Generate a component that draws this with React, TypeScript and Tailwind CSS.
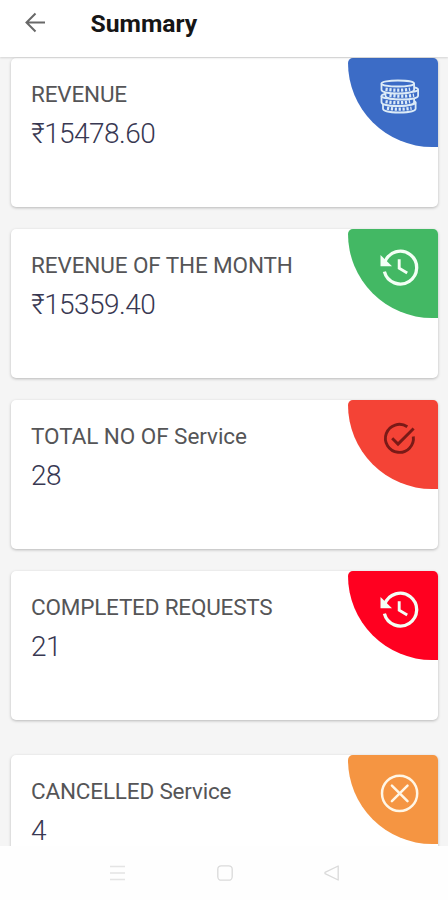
import type { ReactNode } from "react";

const coins = [
  { x: 3, y: 25.5 },
  { x: 1.5, y: 19 },
  { x: 5.5, y: 12.5 },
  { x: 1.5, y: 6.5 },
];

function CoinsIcon() {
  return (
    <svg width="40" height="40" viewBox="0 0 40 40" fill="#3c6cc6" stroke="#dcebf7" strokeWidth="1.8">
      {coins.map(({ x, y }) => (
        <g key={y}>
          <path d={`M${x} ${y}v6.2c0 2 6 3.8 16.3 3.8s16.3-1.8 16.3-3.8v-6.2`} />
          <ellipse cx={x + 16.3} cy={y} rx="16.3" ry="3" />
          <path d={`M${x + 4} ${y + 5.6}q12.3 2.2 24.6 0`} fill="none" strokeWidth="3.2" strokeDasharray="2.2 1.7" />
        </g>
      ))}
    </svg>
  );
}

function HistoryIcon() {
  return (
    <svg width="40" height="40" viewBox="0 0 40 40" fill="none" stroke="#f3fff5" strokeWidth="3.3">
      <path d="M4.8 14.2A16.4 16.4 0 1 1 4.4 23.7" />
      <path d="M.5 7V18.2H12Z" fill="#f3fff5" stroke="none" />
      <path d="M19.2 11.2v9l8 4.8" strokeWidth="2.9" />
    </svg>
  );
}

function CheckIcon() {
  return (
    <svg width="40" height="40" viewBox="0 0 40 40" fill="none" stroke="#7a1a17" strokeWidth="2.9">
      <path d="M27.3 7.8A14 14 0 1 0 33.3 17.5" />
      <path d="M12.2 19.3l5.8 5.8L33.6 9.5" />
    </svg>
  );
}

function CancelIcon() {
  return (
    <svg width="40" height="40" viewBox="0 0 40 40" fill="none" stroke="#fff6e6" strokeWidth="2.5">
      <circle cx="19.6" cy="19.4" r="17.6" />
      <path d="M11.9 11.6l15.6 15.6M27.5 11.6L11.9 27.2" strokeLinecap="round" />
    </svg>
  );
}

type CardProps = {
  label: string;
  value: string;
  labelClass: string;
  badge: string;
  icon: ReactNode;
};

function Card({ label, value, labelClass, badge, icon }: CardProps) {
  return (
    <section className="flex h-[149px] shrink-0 justify-between rounded-[5px] bg-white pl-5 shadow-[0_1px_3px_rgba(0,0,0,0.25)]">
      <div className="flex flex-col pt-[22px] whitespace-nowrap">
        <h2 className={`h-7 text-[22.5px] leading-7 text-[#555557] ${labelClass}`}>{label}</h2>
        <p className="mt-2 h-9 text-[28px] leading-9 font-light tracking-[-0.55px] text-[#383852]">{value}</p>
      </div>
      <div
        className={`flex h-[89.4px] w-[89.7px] justify-center rounded-t-[5px] rounded-bl-[86px] pt-[18.5px] pl-[13px] ${badge}`}
      >
        {icon}
      </div>
    </section>
  );
}

export default function App() {
  return (
    <div className="flex h-[900px] w-[448px] flex-col overflow-hidden bg-[#f5f5f5] font-['Roboto','Noto_Sans',sans-serif]">
      <header className="z-10 flex h-[57px] shrink-0 items-start bg-white pl-[25px] shadow-[0_1px_2px_rgba(0,0,0,0.14)]">
        <svg className="mt-3" width="21" height="21" viewBox="0 0 21 21" fill="none" stroke="#686868" strokeWidth="2">
          <path d="M20 10.5H2M10.5 1.5l-9 9 9 9" />
        </svg>
        <h1 className="ml-[44.5px] pt-2 text-[24.7px] leading-8 font-bold text-[#161616]">Summary</h1>
      </header>
      <main className="flex h-[789px] shrink-0 flex-col gap-[22px] overflow-hidden pt-px pr-2.5 pl-[11px]">
        <Card label="REVENUE" value="₹15478.60" labelClass="tracking-[-0.18px]" badge="bg-[#3c6cc6]" icon={<CoinsIcon />} />
        <Card label="REVENUE OF THE MONTH" value="₹15359.40" labelClass="tracking-[-0.11px]" badge="bg-[#43b864]" icon={<HistoryIcon />} />
        <Card label="TOTAL NO OF Service" value="28" labelClass="tracking-[-0.06px]" badge="bg-[#f44336]" icon={<CheckIcon />} />
        <Card label="COMPLETED REQUESTS" value="21" labelClass="tracking-[-0.2px]" badge="bg-[#ff0020]" icon={<HistoryIcon />} />
        <div className="mt-[13px] shrink-0">
          <Card label="CANCELLED Service" value="4" labelClass="tracking-[-0.18px]" badge="bg-[#f59542]" icon={<CancelIcon />} />
        </div>
      </main>
      <nav className="flex flex-1 items-start bg-[#fefefe] pt-[19px] pl-[109px]">
        <svg width="16" height="16" viewBox="0 0 16 16" fill="none" stroke="#e4e4e4" strokeWidth="1.3">
          <path d="M1 1.5h15M1 8h15M1 14.5h15" />
        </svg>
        <svg className="ml-[92px]" width="16" height="16" viewBox="0 0 16 16" fill="none" stroke="#dadada" strokeWidth="1.3">
          <rect x=".8" y=".8" width="14.4" height="14.4" rx="3.5" />
        </svg>
        <svg className="ml-[91px]" width="16" height="16" viewBox="0 0 16 16" fill="none" stroke="#dadada" strokeWidth="1.3" strokeLinejoin="round">
          <path d="M14.2 1v14L1 8.7V7.3Z" />
        </svg>
      </nav>
    </div>
  );
}
